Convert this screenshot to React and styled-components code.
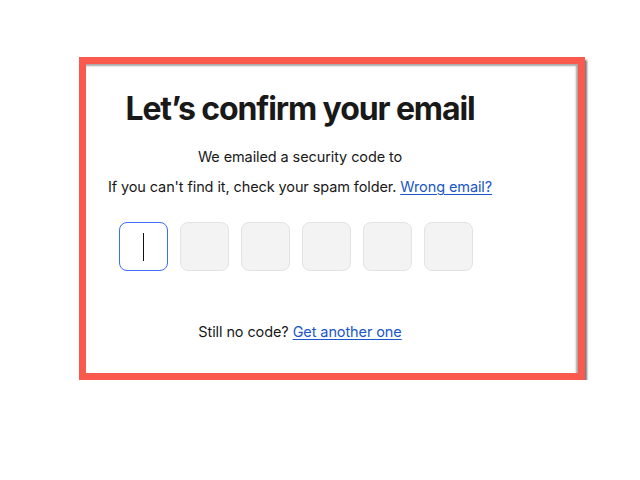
import React from "react";
import styled, { createGlobalStyle } from "styled-components";

const Global = createGlobalStyle`
  html, body { margin: 0; padding: 0; background: #ffffff; }
  body { font-family: Inter, "Noto Sans", "Liberation Sans", sans-serif; color: #191919; }
`;

const Frame = styled.div`
  box-sizing: border-box;
  margin: 57px 0 0 79px;
  width: 506px;
  height: 323px;
  border: 7px solid #f95a4d;
  box-shadow: 2px 3px 2px rgba(0, 0, 0, 0.55);
  background: #fff;
`;

const Card = styled.div`
  box-sizing: border-box;
  height: 100%;
  box-shadow: inset -2px 2px 2px rgba(0, 0, 0, 0.35);
  padding: 25px 0 0 14px;
`;

const Column = styled.div`
  width: 400px;
  display: flex;
  flex-direction: column;
  align-items: center;
`;

const Title = styled.h1`
  margin: 0;
  font-size: 32px;
  line-height: 40px;
  font-weight: 700;
  letter-spacing: -1.1px;
  white-space: nowrap;
`;

const Text = styled.p`
  margin: ${(p) => p.$mt || 0}px 0 0;
  font-size: 14.5px;
  line-height: 20px;
  white-space: nowrap;
  letter-spacing: -0.1px;
`;

const Link = styled.a`
  color: #1a56c9;
  text-decoration: underline;
  text-underline-offset: 2px;
  cursor: pointer;
`;

const Boxes = styled.div`
  display: flex;
  gap: 12px;
  margin-top: 25px;
  align-self: flex-start;
  margin-left: 19px;
`;

const Digit = styled.div`
  box-sizing: border-box;
  width: 49px;
  height: 49px;
  border-radius: 8px;
  border: ${(p) => (p.$active ? "1.5px solid #3c6ef6" : "1px solid #e3e3e3")};
  background: ${(p) => (p.$active ? "#ffffff" : "#f3f3f3")};
  display: flex;
  align-items: center;
  justify-content: center;
`;

const Caret = styled.span`
  display: block;
  width: 1px;
  height: 28px;
  background: #111;
`;

export default function App() {
  return (
    <>
      <Global />
      <Frame>
        <Card>
          <Column>
            <Title>Let’s confirm your email</Title>
            <Text $mt={18}>We emailed a security code to</Text>
            <Text $mt={10}>
              If you can't find it, check your spam folder. <Link>Wrong email?</Link>
            </Text>
            <Boxes>
              {[0, 1, 2, 3, 4, 5].map((i) => (
                <Digit key={i} $active={i === 0}>
                  {i === 0 && <Caret />}
                </Digit>
              ))}
            </Boxes>
            <Text $mt={51}>
              Still no code? <Link>Get another one</Link>
            </Text>
          </Column>
        </Card>
      </Frame>
    </>
  );
}
